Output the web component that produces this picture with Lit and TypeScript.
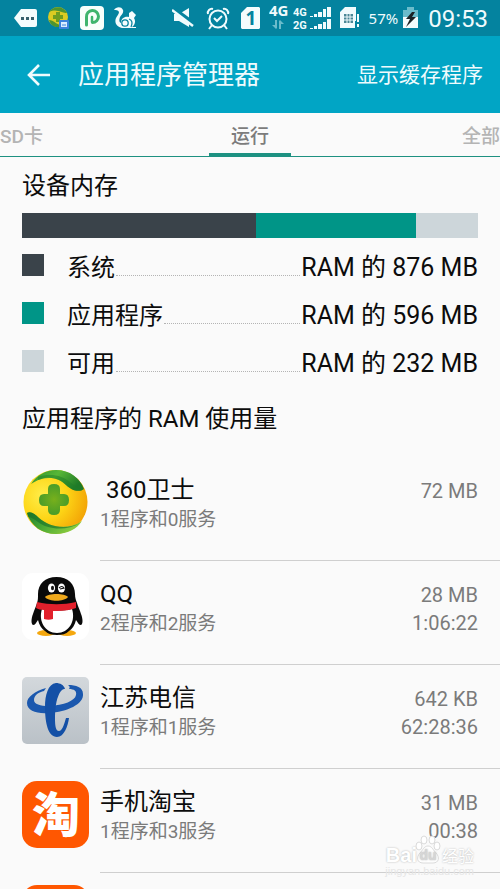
import { LitElement, html, css, svg, nothing, type TemplateResult } from "lit";
import { customElement, property, state } from "lit/decorators.js";
import { classMap } from "lit/directives/class-map.js";

interface MemoryPart {
  kind: "system" | "apps" | "free";
  label: string;
  mb: number;
}

interface RunningApp {
  icon: string;
  name?: string;
  detail?: string;
  size?: string;
  time?: string;
}

const MEMORY: MemoryPart[] = [
  { kind: "system", label: "系统", mb: 876 },
  { kind: "apps", label: "应用程序", mb: 596 },
  { kind: "free", label: "可用", mb: 232 },
];

const APPS: RunningApp[] = [
  { icon: "guard", name: "\u00a0360卫士", detail: "1程序和0服务", size: "72 MB" },
  { icon: "qq", name: "QQ", detail: "2程序和2服务", size: "28 MB", time: "1:06:22" },
  { icon: "telecom", name: "江苏电信", detail: "1程序和1服务", size: "642 KB", time: "62:28:36" },
  { icon: "taobao", name: "手机淘宝", detail: "1程序和3服务", size: "31 MB", time: "00:38" },
  { icon: "orange" },
];

const TABS = ["SD卡", "运行", "全部"];

/* Launcher icons, drawn on a 67 x 67 grid */

const guardIcon = svg`
  <defs>
    <radialGradient id="ball" cx="0.3" cy="0.4" r="0.75">
      <stop offset="0" stop-color="#ffee4a" />
      <stop offset="0.5" stop-color="#fdd516" />
      <stop offset="1" stop-color="#f2a005" />
    </radialGradient>
    <linearGradient id="leafTop" x1="0" y1="0" x2="1" y2="0.4">
      <stop offset="0" stop-color="#2f8f2c" />
      <stop offset="0.5" stop-color="#58b737" />
      <stop offset="1" stop-color="#1f7a28" />
    </linearGradient>
    <linearGradient id="leafLow" x1="0" y1="0" x2="1" y2="0.4">
      <stop offset="0" stop-color="#1f7f2a" />
      <stop offset="0.5" stop-color="#4cab35" />
      <stop offset="1" stop-color="#8ccc3f" />
    </linearGradient>
    <radialGradient id="cross" cx="0.5" cy="0.5" r="0.6">
      <stop offset="0" stop-color="#78b01c" />
      <stop offset="1" stop-color="#3f982b" />
    </radialGradient>
  </defs>
  <circle cx="33.500" cy="33" r="32" fill="url(#ball)" />
  <path d="M9 15C15 6 24 1 34 1c14 0 24 8 28 19-5 4-13 1-18-4C36 8 24 5 9 15z" fill="url(#leafTop)" />
  <path d="M16 8c12-4 24-2 33 6 5 4 9 7 13 6-5 4-13 1-18-4C37 9 27 7 16 11z" fill="#1f7d28" opacity="0.5" />
  <path d="M5 44c4-2 8 1 12 5 10 9 28 13 43 3-5 8-15 13-26 13C20 65 9 57 5 44z" fill="url(#leafLow)" />
  <path d="M5 44c4-2 8 1 12 5 9 8 26 13 41 5-13 8-32 7-42-1-4-3-7-5-10-5z" fill="#17702a" opacity="0.6" />
  <path d="M26 20q0-5 6-5t6 5v5h4q5 0 5 6t-5 6h-4v4q0 5-6 5t-6-5v-4h-4q-5 0-5-6t5-6h4z" fill="url(#cross)" />
`;

const qqIcon = svg`
  <rect width="67" height="67" rx="11" fill="#fff" />
  <ellipse cx="24" cy="60" rx="9" ry="3" fill="#f5a80f" />
  <ellipse cx="45" cy="60" rx="9" ry="3" fill="#f5a80f" />
  <path d="M34.500 4C23 4 16 11 16 21c0 4 0 6-1 9-1 4-3 7-4 11-2 5-2 10 0 11 2 0 3-2 5-5 1 5 4 9 7 11 3 3 7 4 12 4s9-1 12-4c3-2 6-6 7-11 2 3 3 5 5 5 2-1 2-6 0-11-1-4-3-7-4-11-1-3-2-5-2-9 0-10-7-17-18.500-17z" fill="#0a0a0a" />
  <path d="M20 36c-4 12 3 24 15 24s19-12 15-24c-9 2-21 2-30 0z" fill="#fff" />
  <path d="M15 29c13 3 26 3 39 0v6c-5 2-12 3-19 3h-4v8c-3 1-6 1-9 0v-9c-3 0-6-1-8-2z" fill="#e2202c" />
  <ellipse cx="29.500" cy="15" rx="3.600" ry="4.600" fill="#fff" />
  <ellipse cx="39.500" cy="15" rx="3.600" ry="4.600" fill="#fff" />
  <ellipse cx="30.500" cy="15" rx="1.500" ry="2.300" fill="#111" />
  <path d="M37 15q3-3 5 0l-4 1" fill="none" stroke="#111" stroke-width="1.200" />
  <path d="M23 24c3-4 20-4 23 0-4 5-19 5-23 0z" fill="#efa91c" />
`;

const telecomIcon = svg`
  <defs>
    <linearGradient id="plate" x1="0" y1="0" x2="0" y2="1">
      <stop offset="0" stop-color="#d3d8dc" />
      <stop offset="1" stop-color="#bac1c7" />
    </linearGradient>
  </defs>
  <rect width="67" height="67" rx="5" fill="url(#plate)" />
  <path d="M24 11C13 14 5 20 5 26c0 8 10 11 22 10 18-1 35-9 34-19 0-7-7-9-15-9 2 1 2 3 1 4 5 0 8 2 7 6-1 6-12 10-27 11-9 0-15-2-15-6 0-5 5-8 10-9z" fill="#1b58ae" />
  <path d="M43 12C42 8 38 6 34 6c-8 1-11 12-11 24 0 16 3 30 12 30 7 0 11-11 12-19h-3c-2 7-4 13-7 13-4 0-4-8-4-14 0-11 2-21 6-26 2-2 3-2 4-2z" fill="#1450a6" />
`;

const taobaoIcon = svg`
  <rect width="67" height="67" rx="15" fill="#ff5701" />
  <text class="glyph" x="34" y="51" text-anchor="middle">淘</text>
`;

const orangeIcon = svg`<rect width="67" height="67" rx="15" fill="#ff5701" />`;

const APP_ICONS: Record<string, unknown> = {
  guard: guardIcon,
  qq: qqIcon,
  telecom: telecomIcon,
  taobao: taobaoIcon,
  orange: orangeIcon,
};

@customElement("app-icon")
export class AppIcon extends LitElement {
  @property() name = "";

  static styles = css`
    :host {
      display: block;
      width: 67px;
      height: 67px;
    }
    svg {
      display: block;
    }
    .glyph {
      font: 900 48px "Noto Sans CJK SC", sans-serif;
      fill: #fff;
    }
  `;

  render() {
    return html`<svg width="67" height="67" viewBox="0 0 67 67" aria-hidden="true">
      ${APP_ICONS[this.name] ?? nothing}
    </svg>`;
  }
}

@customElement("status-bar")
export class StatusBar extends LitElement {
  static styles = css`
    :host {
      display: flex;
      justify-content: space-between;
      align-items: center;
      height: 36px;
      padding: 0 12px 0 14px;
      background: #04839f;
      color: #f0fbfd;
    }
    .group {
      display: flex;
      align-items: center;
      gap: 10px;
    }
    .right {
      gap: 9px;
    }
    svg {
      display: block;
      flex: none;
    }
    .net {
      font: 700 15px/14px "Noto Sans", sans-serif;
      fill: #f0fbfd;
    }
    .small {
      font: 700 11px/12px Roboto, sans-serif;
      fill: #f0fbfd;
    }
    .sim {
      font: 700 19px "Noto Sans", sans-serif;
      fill: #04839f;
    }
    .power {
      display: flex;
      align-items: center;
      gap: 4px;
      font: 15px/20px "Noto Sans", sans-serif;
    }
    .clock {
      padding-top: 1px;
      font: 24px/30px Roboto, sans-serif;
    }
    .signal {
      display: flex;
      gap: 5px;
    }
  `;

  render(): TemplateResult {
    return html`
      <div class="group">
        <svg width="23" height="18" viewBox="0 0 23 18">
          <path d="M7 0h14q2 0 2 2v14q0 2-2 2H7L0 9z" fill="#f4fcfd" />
          <path d="M7 8h3v3H7zM12 8h3v3h-3zM17 8h3v3h-3z" fill="#37606c" />
        </svg>
        <svg width="23" height="24" viewBox="0 0 23 24">
          <circle cx="11" cy="11" r="10" fill="#dccb22" />
          <path d="M2 6C6 0 16-1 20 7c-5 1-9-5-18-1zM2 14c5 0 8 6 14 5-5 4-12 2-14-5z" fill="#4f9430" />
          <path d="M9 6h4v3h3v4h-3v3H9v-3H6V9h3z" fill="#6f9d20" />
          <rect x="12" y="14" width="10" height="9" rx="1" fill="#3d84dc" />
          <path d="M14 16h6v5h-6z" fill="#dbeeff" />
          <path d="M15 19h4" stroke="#3d84dc" />
        </svg>
        <svg width="24" height="24" viewBox="0 0 24 24">
          <rect width="24" height="24" rx="4" fill="#f8fffb" />
          <path d="M6.500 19V11a6 6 0 1 1 6 5.500" fill="none" stroke="#3fb56d" stroke-width="3" stroke-linecap="round" />
          <path d="M12 16v-5" stroke="#3fb56d" stroke-width="2.500" stroke-linecap="round" />
        </svg>
        <svg width="23" height="22" viewBox="0 0 23 22" fill="#f4fcfd">
          <path d="M0 3C2 0 7-1 9 3c1 3-2 5-3 7-1 3-1 5 1 6 0-5 4-7 8-6V6l3-2 4 4-2 3c2 3 1 7-2 9h4v1H8C3 20 0 16 2 11c1-2 3-4 3-6C4 3 2 3 0 3z" />
          <circle cx="11" cy="16" r="3.200" fill="none" stroke="#04839f" stroke-width="1.300" />
          <path d="M15 12c3 1 4 4 2 8" fill="none" stroke="#04839f" stroke-width="1.300" />
        </svg>
      </div>
      <div class="group right">
        <svg width="25" height="20" viewBox="0 0 25 20">
          <path d="M2 6h5l10-6v19L7 13H2z" fill="#f0fbfd" />
          <path d="M0 0l23 17" stroke="#04839f" stroke-width="5" />
          <path d="M0 2l21 16" stroke="#f0fbfd" stroke-width="2.400" />
        </svg>
        <svg width="26" height="23" viewBox="0 0 26 23" fill="none" stroke="#f0fbfd" stroke-width="2">
          <circle cx="12" cy="12" r="8.500" />
          <path d="M8 11l3 3 5-5" />
          <path d="M2 7C1 4 4 1 7 2M22 7c1-3-2-6-5-5M6 18l-3 4M18 18l3 4" />
        </svg>
        <svg width="19" height="22" viewBox="0 0 19 22">
          <path d="M6 0h12l1 1v20l-1 1H1l-1-1V6z" fill="#f4fcfd" />
          <text class="sim" x="10" y="18" text-anchor="middle">1</text>
        </svg>
        <div class="signal">
          <svg width="19" height="26" viewBox="0 0 19 26">
            <text class="net" x="0" y="11">4G</text>
            <path d="M6 15v5H3l4 4 1-1v-8zM12 24v-5h3l-4-4-1 1v8z" fill="#6bbccb" />
          </svg>
          <svg width="38" height="26" viewBox="0 0 38 26">
            <text class="small" x="0" y="11">4G</text>
            <text class="small" x="0" y="24">2G</text>
            <path d="M17 11h3v1h-3zM21 9h3v3h-3zM25 7h4v5h-4zM30 4h3v8h-3zM34 2h4v10h-4zM17 23h3v1h-3zM21 21h3v3h-3zM25 19h4v5h-4zM30 17h3v7h-3zM34 14h4v10h-4z" fill="#f0fbfd" />
          </svg>
        </div>
        <svg width="20" height="22" viewBox="0 0 20 22">
          <path d="M5 0h11v14h-1v7H0V5z" fill="#f0fbfd" />
          <path d="M4 7h9v9H4z" fill="#4a8796" />
          <path d="M4 10h9M4 13h9M7 7v9M10 7v9" stroke="#f0fbfd" />
          <path d="M17 7h2v8h-2zM17 17h2v3h-2z" fill="#f0fbfd" />
        </svg>
        <span class="power">
          57%
          <svg width="17" height="22" viewBox="0 0 17 22">
            <path d="M5 0h7v3h4v9H1V3h4z" fill="#6bbccb" />
            <path d="M1 10h15v11H1z" fill="#f4fcfd" />
            <path d="M10 5L4 12h4l-4 8 10-10h-4l3-5z" fill="#1c2326" />
          </svg>
        </span>
        <span class="clock">09:53</span>
      </div>
    `;
  }
}

@customElement("app-root")
export class AppRoot extends LitElement {
  @state() private tab = 1;

  static styles = css`
    :host {
      display: flex;
      flex-direction: column;
      position: relative;
      height: 100vh;
      overflow: hidden;
      background: #fafafa;
      color: #0c0c0c;
      font: 24px/32px Roboto, "Noto Sans CJK SC", sans-serif;
    }
    * {
      box-sizing: border-box;
    }
    button {
      border: 0;
      padding: 0;
      background: none;
      color: inherit;
      font: inherit;
      cursor: pointer;
    }
    h1,
    h2,
    ul,
    p {
      margin: 0;
      padding: 0;
      font-size: 24px;
      font-weight: 400;
      list-style: none;
    }
    .bar {
      display: flex;
      flex: none;
      align-items: center;
      height: 77px;
      padding: 0 17px 0 26px;
      background: #01a5c5;
      color: #effbfd;
    }
    .back {
      display: flex;
      margin-right: 26px;
    }
    .bar h1 {
      flex: 1;
      font-size: 26px;
    }
    .action {
      font-size: 21px;
    }
    .tabs {
      display: flex;
      flex: none;
      justify-content: space-between;
      height: 44px;
      border-bottom: 1px solid #1d9181;
    }
    .tab {
      flex: 1;
      padding-top: 4px;
      color: #b4b4b4;
      font-size: 19px;
      font-weight: 500;
      text-align: left;
    }
    .tab:last-child {
      text-align: right;
    }
    .tab.on {
      flex: none;
      width: 82px;
      border-bottom: 3px solid #1d9181;
      padding-top: 7px;
      color: #7c7c7c;
      text-align: center;
    }
    main {
      flex: 1;
      min-height: 0;
      overflow-y: auto;
      scrollbar-width: none;
      padding: 13px 22px 0;
    }
    .meter {
      display: flex;
      height: 25px;
      margin: 11px 0 14px;
    }
    .system {
      background: #3a434a;
    }
    .apps {
      background: #009587;
    }
    .free {
      background: #cdd6da;
    }
    .legend li {
      display: flex;
      height: 48px;
    }
    .swatch {
      width: 22px;
      height: 22px;
      margin: 2px 23px 0 0;
    }
    .dots {
      flex: 1;
      height: 24px;
      margin: 0 1px;
      border-bottom: 1px dotted #b4b4b4;
    }
    .amount {
      font-size: 25px;
    }
    .usage {
      margin-top: 7px;
    }
    .list {
      margin: 22px -22px 0 0;
    }
    .app {
      display: grid;
      grid-template-columns: 67px 1fr;
      column-gap: 11px;
      height: 104px;
    }
    .app app-icon {
      margin-top: 12px;
    }
    .info {
      display: flex;
      justify-content: space-between;
      border-bottom: 1px solid #cfcfcf;
      padding: 17px 22px 0 0;
    }
    .info .detail,
    .numbers p {
      color: #7b7b7b;
      font-size: 19px;
      line-height: 28px;
    }
    .numbers {
      padding-top: 3px;
      text-align: right;
    }
    .numbers p {
      font-size: 20px;
    }
    .mark {
      position: absolute;
      right: 26px;
      bottom: 12px;
      display: grid;
      color: #fff;
      font: 700 20px/20px "Liberation Sans", sans-serif;
      text-shadow: 0 0 2px #b0b0b0;
      pointer-events: none;
    }
    .brand {
      display: flex;
      align-items: center;
      justify-content: flex-end;
    }
    .brand svg {
      margin: -10px 1px 0 -2px;
    }
    .brand .cjk {
      font: 16px/20px "Noto Sans CJK SC", sans-serif;
    }
    .du {
      font: 700 14px "Liberation Sans", sans-serif;
      fill: #d6d6d6;
    }
    .site {
      color: #e6e6e6;
      font-size: 11px;
      font-weight: 400;
      line-height: 12px;
      text-shadow: none;
    }
  `;

  render(): TemplateResult {
    return html`
      <status-bar></status-bar>
      <header class="bar">
        <button class="back" aria-label="返回">
          <svg width="26" height="26" viewBox="0 0 26 26" fill="none" stroke="#effbfd" stroke-width="2.600">
            <path d="M24 13H4M13 3L3 13l10 10" />
          </svg>
        </button>
        <h1>应用程序管理器</h1>
        <button class="action">显示缓存程序</button>
      </header>
      <nav class="tabs" role="tablist">
        ${TABS.map(
          (label, i) => html`<button
            role="tab"
            aria-selected=${i === this.tab ? "true" : "false"}
            class=${classMap({ tab: true, on: i === this.tab })}
            @click=${() => (this.tab = i)}
          >${label}</button>`
        )}
      </nav>
      <main>
        <h2>设备内存</h2>
        <div class="meter">
          ${MEMORY.map((m) => html`<div class=${m.kind} style="flex:${m.mb}"></div>`)}
        </div>
        <ul class="legend">
          ${MEMORY.map(
            (m) => html`<li>
              <span class="swatch ${m.kind}"></span>
              <span>${m.label}</span>
              <span class="dots"></span>
              <span class="amount">RAM 的 ${m.mb} MB</span>
            </li>`
          )}
        </ul>
        <h2 class="usage">应用程序的 RAM 使用量</h2>
        <ul class="list">
          ${APPS.map(
            (a) => html`<li class="app">
              <app-icon name=${a.icon}></app-icon>
              <div class="info">
                <div>
                  <p>${a.name}</p>
                  <p class="detail">${a.detail}</p>
                </div>
                <div class="numbers">
                  <p>${a.size}</p>
                  ${a.time ? html`<p>${a.time}</p>` : nothing}
                </div>
              </div>
            </li>`
          )}
        </ul>
      </main>
      <div class="mark">
        <div class="brand">
          <span>Bai</span>
          <svg width="26" height="30" viewBox="0 0 26 30" fill="#fff" stroke="#dadada">
            <ellipse cx="4" cy="11" rx="3" ry="4" />
            <ellipse cx="9" cy="5" rx="3" ry="4" />
            <ellipse cx="17" cy="5" rx="3" ry="4" />
            <ellipse cx="22" cy="11" rx="3" ry="4" />
            <path d="M13 11c4 0 5 4 8 7 4 4 3 10-3 10H8c-6 0-7-6-3-10 3-3 4-7 8-7z" />
            <text class="du" x="13" y="25" text-anchor="middle" stroke="none">du</text>
          </svg>
          <span class="cjk">经验</span>
        </div>
        <span class="site">jingyan.baidu.com</span>
      </div>
    `;
  }
}
